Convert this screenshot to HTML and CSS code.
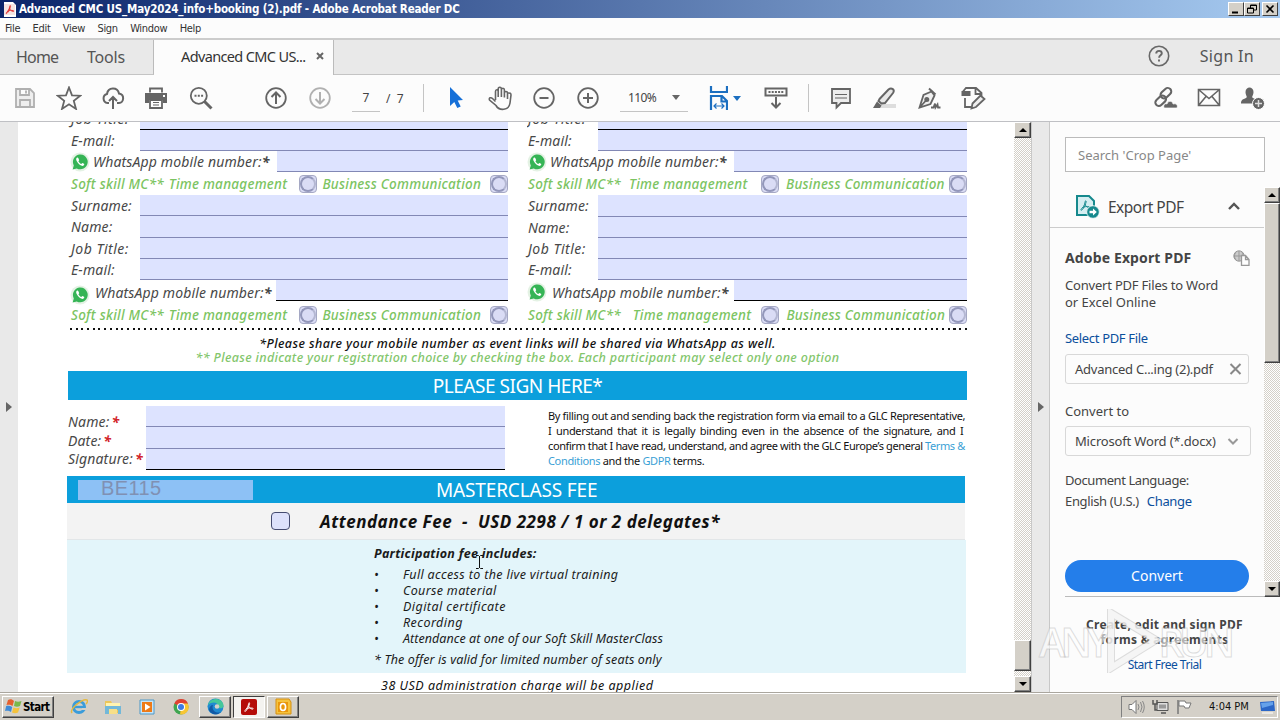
FILE: index.html
```html
<!DOCTYPE html>
<html lang="en">

<head>
  <meta charset="UTF-8">
  <meta name="viewport" content="width=device-width, initial-scale=1.0">
  <title>Advanced CMC US_May2024_info+booking (2).pdf - Adobe Acrobat Reader DC</title>
  <link rel="stylesheet" href="styles.css">
</head>

<body>
  <svg width="0" height="0" class="defs">
    <symbol id="whatsapp" viewBox="0 0 20 20">
      <circle cx="10" cy="10" r="9.5" fill="#e4f2e4"/>
      <path d="M2.6 17.4l1.2-4A7.4 7.4 0 1 1 6.800 16.400z" fill="#35b455"/>
      <path d="M7 5.600c-1.400 1-1 3 .8 5.200s4 3.800 5.800 2.800c.8-.6.8-1.400.4-1.800l-1.600-.8-1.200 1c-1.400-.6-2.200-1.600-2.800-2.800l.8-1-.8-2c-.4-.8-1-.9-1.400-.6z" fill="#fff"/>
    </symbol>
    <symbol id="acrobat" viewBox="0 0 20 20">
      <path d="M3 16c2-1.500 6-6 6.500-12 .1-2 2-1.500 1.500.5C10 8 9 11 5.500 16c-1.500 2-3.500 1.500-2.500 0zM5 13.500c4-2 7-2.300 11-1.500 2 .6 1 2-1 1.500-3-.8-5-3-6-6" fill="none" stroke="currentColor" stroke-width="1.500"/>
    </symbol>
  </svg>

  <div class="app">
    <div class="titlebar">
      <svg class="title-icon" width="12" height="15" viewBox="0 0 12 15"><path d="M0 0h9l3 3v12H0z" fill="#fff"/><path d="M0 2h11v11H0z" fill="#f4e4e2"/><svg x="0" y="2" width="12" height="11" color="#d22"><use href="#acrobat"/></svg></svg>
      <span class="title-text">Advanced CMC US_May2024_info+booking (2).pdf - Adobe Acrobat Reader DC</span>
      <div class="win-buttons">
        <span class="win-btn"><svg width="14" height="12"><path d="M3 9.500h6" stroke="#000" stroke-width="2"/></svg></span>
        <span class="win-btn"><svg width="14" height="12"><path d="M5.500 5V2h6v5H9M5 2.500h7M2.500 5h6v5h-6zM2 5.500h7" fill="none" stroke="#000"/></svg></span>
        <span class="win-btn last"><svg width="14" height="12"><path d="M3.500 2.500l7 7m0-7l-7 7" stroke="#000" stroke-width="1.600"/></svg></span>
      </div>
    </div>

    <div class="menubar">
      <span>File</span><span>Edit</span><span>View</span><span>Sign</span><span>Window</span><span>Help</span>
    </div>

    <div class="tabs">
      <div class="tab-left"><span class="home">Home</span><span class="tools">Tools</span></div>
      <div class="tab-active"><span>Advanced CMC US...</span><svg width="8" height="8"><path d="M1 1l6 6m0-6l-6 6" stroke="#666" stroke-width="2"/></svg></div>
      <div class="tab-right">
        <svg width="22" height="22" viewBox="0 0 22 22"><circle cx="11" cy="11" r="9.700" fill="none" stroke="#686868" stroke-width="1.600"/><path d="M8.200 8.500c.1-3.600 5.600-3.400 5.600-.2 0 2-2.700 2-2.700 4.400M11 14.500v2" fill="none" stroke="#686868" stroke-width="1.900"/></svg>
        <span class="signin">Sign In</span>
      </div>
    </div>

    <div class="toolbar">
      <span class="tool dim"><svg width="24" height="24"><path d="M3 3h14l4 4v14H3zM7 3v6h9V3M7 21v-7h10v7M13 4.500v3" fill="#eee"/></svg></span>
      <span class="tool"><svg width="26" height="24"><path d="M13 1.500l3 7.800 8.300.4-6.500 5.200 2.200 8-7-4.600-7 4.600 2.200-8L1.700 9.700l8.300-.4z"/></svg></span>
      <span class="tool"><svg width="24" height="24"><path d="M8 17H6.500a4.600 4.600 0 0 1-.5-9C7 .8 16.500.8 18 7.500c6 .8 5 9.500 0 9.500h-2M12 23V11M8 15l4-4 4 4" stroke-width="2"/></svg></span>
      <span class="tool print"><svg width="24" height="24"><path d="M6 2h12v4H6zM1 7h22v10h-4v-3H5v3H1z" fill="#656565" stroke="none"/><path d="M6 6.500V2.500h12v4M6 14h12v8H6z" fill="#fff"/><path d="M9 16.500h6M9 19h6" stroke-width="1.200"/><path d="M19 10h2" stroke="#fff"/></svg></span>
      <span class="tool"><svg width="24" height="24"><circle cx="9.800" cy="9.800" r="8"/><path d="M15.500 15.500l7 7" stroke-width="3"/><path d="M5.500 9.800h2m1.300 0h2m1.300 0h2" stroke-width="2"/></svg></span>
      <span class="tool up"><svg width="24" height="24"><circle cx="12" cy="12" r="9.800"/><path d="M12 18V6.500M7.500 11L12 6.500l4.500 4.500" stroke-width="2"/></svg></span>
      <span class="tool dim"><svg width="24" height="24"><circle cx="12" cy="12" r="9.800"/><path d="M12 6v11.500M7.500 13l4.500 4.500 4.500-4.500" stroke-width="2"/></svg></span>
      <span class="page-box">7</span><span class="page-total">/&nbsp;&nbsp;7</span>
      <span class="sep"></span>
      <span class="tool cursor-tool"><svg width="14" height="24"><path d="M1 1l13 13-5.300.4 3 6-3.400 1.600-3-6L1 20z" fill="#1670d8" stroke="none"/></svg></span>
      <span class="tool"><svg width="24" height="26"><path d="M7.500 15V6.500c0-2.300 2.700-2.300 2.700 0V12 4c0-2.400 3.200-2.400 3.200 0v8V5c0-2.300 3-2.300 3 0v7.500V8c0-2 3.100-2 3.100 0 2 0 3.500-.5 3.500 2l-1 8c-1 8-11 8-14 2.500L1.500 15c-1-2.200 1.500-3 3-1.500l3 3M19.500 8v6" stroke-width="1.600"/></svg></span>
      <span class="tool"><svg width="24" height="24"><circle cx="12" cy="12" r="9.800"/><path d="M7.500 12h9" stroke-width="2"/></svg></span>
      <span class="tool"><svg width="24" height="24"><circle cx="12" cy="12" r="9.800"/><path d="M7 12h10M12 7v10" stroke-width="2"/></svg></span>
      <span class="zoom-box">110%<i class="caret"></i></span>
      <span class="fit"><svg width="19" height="26"><path d="M2 1v6h16V1M2 25V11h11l5 5v9M12.500 11v5.500H18" fill="none" stroke="#1c6fc0" stroke-width="2.200"/><path d="M5 21h10M7.500 18.500L5 21l2.500 2.500m5-5L15 21l-2.500 2.500" fill="none" stroke="#1c6fc0" stroke-width="1.200"/></svg><i class="caret blue"></i></span>
      <span class="tool keys"><svg width="24" height="24"><path d="M1.500 2.500h21v7h-21z" stroke-width="2"/><path d="M4.500 6h15" stroke-dasharray="2 1.200" stroke-width="2"/><path d="M12 11v10M7.500 17l4.500 4.500 4.500-4.500" stroke-width="2"/></svg></span>
      <span class="sep short"></span>
      <span class="tool comment"><svg width="24" height="24"><path d="M3 3h18v14h-9l-4.500 4.500V17H3z" fill="#ededed"/><path d="M6 8.500h12M6 12h12" stroke-width="1.200"/></svg></span>
      <span class="tool"><svg width="26" height="24"><path d="M9 18h15v4H2z" fill="#ddd" stroke="none"/><path d="M7.500 13L16.500 3.500c3-2.500 7 .2 4.500 3.500L13 17l-3.500.5L6.500 15z" fill="#e8e8e8" stroke-width="2"/><path d="M5 15.500l4.500 4L8 22H1z" fill="#656565" stroke="none"/></svg></span>
      <span class="tool"><svg width="25" height="24"><path d="M12 2.500l6.500 6" stroke-width="2"/><path d="M14.500 5.500l-8 3.500-4 12.500 11-3.500 4-8.500zM2.500 21.500l6.500-7" fill="#efefef"/><path d="M14 21.500h2.500l1.500-4 .5 4 2-3 .5 3h2.500" /><circle cx="9.800" cy="13.500" r="1.600" fill="#656565"/></svg></span>
      <span class="tool"><svg width="26" height="24"><path d="M8 2h8l5.500 5v3M15.500 2v6h6M5 12v9h6"/><path d="M1.500 5h9v5h-9z" fill="#656565" stroke="none"/><path d="M3 5.500L6 2h3" /><path d="M12.500 17.500l8-8 4 3.500-8.500 8-4.500 1.500z" fill="#eee"/></svg></span>
      <div class="toolbar-end">
        <span class="tool"><svg width="26" height="24"><g transform="rotate(-43 12 11)"><rect x="1" y="8" width="12" height="7" rx="3.500" stroke-width="2.100"/><rect x="10" y="6" width="12" height="7" rx="3.500" stroke-width="2.100"/></g><path d="M12 22c-1-3 1-5 3-4 1-4 6-3 6 0 4-1 5 2 4 4z" fill="#656565" stroke="#fff" stroke-width=".7"/></svg></span>
        <span class="tool"><svg width="24" height="24"><path d="M1.500 3.500h21v16h-21zl10.500 9 10.500-9M1.500 19.500l7.500-9m13.500 9l-7.500-9" stroke-width="1.600"/></svg></span>
        <span class="tool"><svg width="26" height="24"><path d="M1 17.500c0-4 2-4 5-5.500 2-1-.5-2.500-.5-6 0-6 8-6 8 0 0 3.500-2.500 5-.5 6l4 2v3.500z" fill="#656565" stroke="none"/><circle cx="18.500" cy="17.500" r="6" fill="#656565" stroke="#fff" stroke-width="1"/><path d="M15 17.500h7m-3.500-3.500v7" stroke="#ddd" stroke-width="1.500"/></svg></span>
      </div>
    </div>

    <div class="main">
      <div class="strip left"><i class="arrow"></i></div>

      <div class="document">
        <div class="columns">
          <div class="column col-left">
            <div class="row r-cut"><label class="job">Job Title:</label><span class="field black"></span></div>
            <div class="row"><label>E-mail:</label><span class="field"></span></div>
            <div class="row wa"><svg width="20" height="20"><use href="#whatsapp"/></svg><label>WhatsApp mobile number:<b>*</b></label><span class="field"></span></div>
            <div class="row soft"><span class="s1">Soft skill MC**</span><span class="s2">Time management</span><i class="radio"></i><span class="s3">Business Communication</span><i class="radio"></i></div>
            <div class="row"><label>Surname:</label><span class="field"></span></div>
            <div class="row tall"><label>Name:</label><span class="field"></span></div>
            <div class="row"><label class="job">Job Title:</label><span class="field"></span></div>
            <div class="row"><label>E-mail:</label><span class="field"></span></div>
            <div class="row wa second"><svg width="20" height="20"><use href="#whatsapp"/></svg><label>WhatsApp mobile number:<b>*</b></label><span class="field black"></span></div>
            <div class="row soft second"><span class="s1">Soft skill MC**</span><span class="s2">Time management</span><i class="radio"></i><span class="s3">Business Communication</span><i class="radio"></i></div>
          </div>
          <div class="column col-right">
            <div class="row r-cut"><label class="job">Job Title:</label><span class="field black"></span></div>
            <div class="row"><label>E-mail:</label><span class="field"></span></div>
            <div class="row wa"><svg width="20" height="20"><use href="#whatsapp"/></svg><label>WhatsApp mobile number:<b>*</b></label><span class="field"></span></div>
            <div class="row soft"><span class="s1">Soft skill MC**</span><span class="s2">Time management</span><i class="radio"></i><span class="s3">Business Communication</span><i class="radio"></i></div>
            <div class="row tall"><label>Surname:</label><span class="field"></span></div>
            <div class="row"><label>Name:</label><span class="field"></span></div>
            <div class="row"><label class="job">Job Title:</label><span class="field"></span></div>
            <div class="row"><label>E-mail:</label><span class="field"></span></div>
            <div class="row wa second"><svg width="20" height="20"><use href="#whatsapp"/></svg><label>WhatsApp mobile number:<b>*</b></label><span class="field black"></span></div>
            <div class="row soft second"><span class="s1">Soft skill MC**</span><span class="s2">Time management</span><i class="radio"></i><span class="s3">Business Communication</span><i class="radio"></i></div>
          </div>
        </div>
        <div class="dots"></div>
        <div class="notes">
          <p class="note-share"><span>*Please share your mobile number as event links will be shared via WhatsApp as well.</span></p>
          <p class="note-choice"><span>** Please indicate your registration choice by checking the box. Each participant may select only one option</span></p>
        </div>
        <div class="heading"><span class="sign-title">PLEASE SIGN HERE*</span></div>
        <div class="sign">
          <div class="sign-labels">
            <label>Name:<b>*</b></label><label>Date:<b>*</b></label><label>Signature:<b>*</b></label>
          </div>
          <div class="sign-fields"><span class="field"></span><span class="field"></span><span class="field black"></span></div>
          <div class="terms">
            <p class="t1">By filling out and sending back the registration form via email to a GLC Representative,</p>
            <p class="t2">I understand that it is legally binding even in the absence of the signature, and I</p>
            <p class="t3">confirm that I have read, understand, and agree with the GLC Europe’s general <a>Terms &amp;</a></p>
            <p class="t4"><a>Conditions</a> and the <a>GDPR</a> terms.</p>
          </div>
        </div>
        <div class="heading fee"><span class="code">BE115</span><span class="fee-title">MASTERCLASS FEE</span></div>
        <div class="attendance"><i class="checkbox"></i><span>Attendance Fee&nbsp; -&nbsp; USD 2298 / 1 or 2 delegates*</span></div>
        <div class="includes">
          <h3>Participation fee includes:</h3>
          <ul>
            <li><span class="i1">Full access to the live virtual training</span></li>
            <li><span class="i2">Course material</span></li>
            <li><span class="i3">Digital certificate</span></li>
            <li><span class="i3">Recording</span></li>
            <li><span class="i5">Attendance at one of our Soft Skill MasterClass</span></li>
          </ul>
          <p>* The offer is valid for limited number of seats only</p>
          <svg class="ibeam" width="9" height="16"><path d="M1 1.500h2.500l1 1 1-1H8M4.500 2v12M1 14.500h2.500l1-1 1 1H8" fill="none" stroke="#111"/></svg>
        </div>
        <div class="charge"><span>38 USD administration charge will be applied</span></div>
      </div>

      <div class="scrollbar doc-scroll">
        <span class="sb-btn"><i class="tri up"></i></span>
        <span class="sb-thumb"></span>
        <span class="sb-btn"><i class="tri down"></i></span>
      </div>
      <div class="strip right"><i class="arrow"></i></div>

      <div class="sidebar">
        <div class="search">Search 'Crop Page'</div>
        <div class="side-scroll">
          <div class="side-body">
            <div class="export-head">
              <svg width="26" height="26" viewBox="0 0 26 26"><path d="M2 2h12l5 5v14H2z" fill="#d5eef1" stroke="#16898d" stroke-width="2"/><svg x="4" y="5" width="13" height="13" color="#16898d"><use href="#acrobat"/></svg><circle cx="18" cy="18" r="6.300" fill="#16898d" stroke="#fff" stroke-width=".8"/><path d="M14.500 16.700h3.500V14.500l3.800 3.500-3.800 3.500v-2.200h-3.500z" fill="#fff"/></svg>
              <span>Export PDF</span>
              <svg class="chev" width="14" height="9"><path d="M2 8l5-5 5 5" fill="none" stroke="#555" stroke-width="2.400"/></svg>
            </div>
            <div class="export-body">
              <div class="adobe"><b>Adobe Export PDF</b><svg width="17" height="16"><circle cx="6" cy="6" r="5.200" fill="#ccc" stroke="#999"/><path d="M1 6h10M6 1v10M3 2c-2 3-2 5 0 8m6-8c1 2 1 3 1 4" stroke="#999" fill="none"/><path d="M8.500 5.500h4l3.500 4v6H8.500zM12.500 6v3.500H16" fill="#fff" stroke="#999" stroke-width="1.300"/></svg></div>
              <p class="convert-text"><span class="c1">Convert PDF Files to Word</span><br><span>or Excel Online</span></p>
              <a class="select">Select PDF File</a>
              <div class="box file"><span>Advanced C...ing (2).pdf</span><svg width="13" height="12"><path d="M1.500 1l10 10m0-10l-10 10" stroke="#888" stroke-width="2"/></svg></div>
              <div class="convert-to">Convert to</div>
              <div class="box format"><span>Microsoft Word (*.docx)</span><svg width="12" height="9"><path d="M1.500 2L6 6.500 10.500 2" fill="none" stroke="#999" stroke-width="2"/></svg></div>
              <div class="language">Document Language:</div>
              <div class="english"><span>English (U.S.)</span><a>Change</a></div>
              <div class="convert">Convert</div>
            </div>
          </div>
          <div class="scrollbar side-bar">
            <span class="sb-btn"><i class="tri up"></i></span>
            <span class="sb-thumb"></span>
            <span class="sb-btn"><i class="tri down"></i></span>
          </div>
        </div>
        <div class="trial"><b class="tr1">Create, edit and sign PDF</b><b class="tr2">forms &amp; agreements</b><a>Start Free Trial</a></div>
      </div>
      <div class="watermark"><span>ANY</span><svg width="56" height="64"><path d="M5 4l45 27L5 59z" fill="none" stroke="#bdbdbd" stroke-opacity=".5" stroke-width="8"/><path d="M5 4l45 27L5 59z" fill="none" stroke="#fff" stroke-opacity=".7" stroke-width="6"/></svg><span>RUN</span></div>
    </div>

    <div class="taskbar">
      <div class="start"><svg width="18" height="17"><path d="M3 2c2-1 4-1 6 1L7.500 8C5.500 6.500 4 6.500 1.500 7z" fill="#e5602f"/><path d="M10 3c2 1 4 1 6.500 0L15 8c-2 1-4 1-6 0z" fill="#79b84a"/><path d="M1.200 8c2-.6 4-.4 6 1L6 14c-2-1.500-4-1.300-6-1z" fill="#3f8bd8"/><path d="M8.500 9.500c2 1 4 1 6.200 0L13 14.500c-2 1-4 1-6 0z" fill="#f4c23c"/></svg><b>Start</b></div>
      <div class="task"><svg width="18" height="18"><circle cx="9" cy="9" r="5.500" fill="none" stroke="#3a9cda" stroke-width="3"/><path d="M4 9h10" stroke="#3a9cda" stroke-width="2.400"/><path d="M12 11h5" stroke="#d4d0c8" stroke-width="2"/><path d="M2 15C-1 11 13 0 17 2c1 1 0 3-1 4" fill="none" stroke="#e6b93e" stroke-width="1.500"/></svg></div>
      <div class="task"><svg width="18" height="16"><path d="M1 2h6l1 2h8v10H1z" fill="#ecc65a"/><path d="M2 4h14v4H2z" fill="#fff3b0"/><path d="M1 7h16v8h-3v-4H5v4H1z" fill="#72b8d9"/><path d="M5 10h8v5H5z" fill="#f7df88"/></svg></div>
      <div class="task"><svg width="16" height="16"><path d="M1 1h14v14H1z" fill="#c7e4f7" stroke="#4c99c8"/><path d="M3 3h10v10H3z" fill="#ed7b18"/><path d="M6 4.500L11.500 8 6 11.500z" fill="#fff"/></svg></div>
      <div class="task"><svg width="16" height="16"><circle cx="8" cy="8" r="7.500" fill="#3fa550"/><path d="M8 8L1.300 4.500A7.500 7.500 0 0 1 15 4.500z" fill="#df4132"/><path d="M8 8h7.500A7.500 7.500 0 0 0 14.600 4.500H8zM8 8l-1 7.500A7.500 7.500 0 0 0 15 5H8z" fill="#f8c633"/><circle cx="8" cy="8" r="4" fill="#fff"/><circle cx="8" cy="8" r="3" fill="#3d7be4"/></svg></div>
      <div class="task raised"><svg width="17" height="17"><circle cx="8.500" cy="8.500" r="8" fill="#1f8ad1"/><path d="M1 7C3-1 15-1 16.500 7c.5 4-5 4-5.500 2 1-5-6-6-10-2z" fill="#44c79a"/><path d="M6 7c-2 5 3 9 8 7-5 5-11 1-12-2 0-3 2-5 4-5z" fill="#1259a5"/><circle cx="10" cy="8.500" r="2.300" fill="#d4d0c8"/></svg></div>
      <div class="task pressed"><svg width="16" height="16"><rect width="16" height="16" rx="2" fill="#b50c08"/><svg x="2" y="2" width="12" height="12" color="#fff"><use href="#acrobat"/></svg></svg></div>
      <div class="task raised outlook"><svg width="17" height="17"><path d="M1 1h13l2 3v12H1z" fill="#f6c33c" stroke="#d58f12"/><path d="M3 4h10v10H3z" fill="#e9960b"/><ellipse cx="8" cy="9" rx="2.600" ry="3.500" fill="none" stroke="#fff" stroke-width="1.600"/></svg></div>
      <div class="tray">
        <svg width="17" height="16"><path d="M1 5.500h3l4-4v13l-4-4H1z" fill="#fff" stroke="#777"/><path d="M10 5q2 3 0 6m2.500-8q3 5 0 10m2-11q3.500 6 0 12" fill="none" stroke="#888"/></svg>
        <svg width="17" height="16"><path d="M5 3.500h11v8H5z" fill="#ddd" stroke="#555"/><path d="M7 5.500h7v4H7z" fill="#999"/><path d="M9 14h5M1 1v4h4V1M3 5v6h2" fill="none" stroke="#555" stroke-width="1.500"/></svg>
        <svg class="flag" width="17" height="16"><path d="M2 1v14" stroke="#777" stroke-width="1.500"/><path d="M3 2h6l1 2h5l-2 5H9L8 7H3z" fill="#fff" stroke="#777"/></svg>
        <span>4:04 PM</span>
        <svg class="desk" width="17" height="14"><path d="M1 2l14-1 1 10H2z" fill="#2c67c7"/><path d="M2 3l12-1v3L3 8z" fill="#66a2ea"/><path d="M3 13h11" stroke="#fff"/></svg>
      </div>
    </div>
  </div>
</body>

</html>
```
FILE: styles.css
```css
* {
  box-sizing: border-box;
}

body {
  margin: 0;
  width: 1280px;
  height: 720px;
  overflow: hidden;
  font-family: "Noto Sans", sans-serif;
  font-size: 13px;
  color: #444;
}

p, h3, ul {
  margin: 0;
  padding: 0;
}

svg {
  flex: none;
  display: block;
}

.defs {
  display: none;
}

a {
  color: #0b4f9c;
}

.app {
  width: 1280px;
  height: 720px;
  display: flex;
  flex-direction: column;
}

.app span, .app label, .app b, .app p {
  white-space: nowrap;
}

/* window title */
.titlebar {
  height: 18px;
  display: flex;
  align-items: center;
  padding-left: 4px;
  background: linear-gradient(90deg, #0a246a, #a6caf0);
}

.title-text {
  margin-left: 3px;
  font: bold 11.5px "DejaVu Sans Condensed", "DejaVu Sans", sans-serif;
  letter-spacing: -0.17px;
  color: #fff;
}

.win-buttons {
  display: flex;
  margin-left: auto;
  padding-right: 2px;
}

.win-btn {
  width: 16px;
  height: 14px;
  background: #d4d0c8;
  border: 1px solid;
  border-color: #fff #404040 #404040 #fff;
}

.win-btn.last {
  margin-left: 2px;
}

.menubar {
  height: 20px;
  display: flex;
  align-items: center;
  padding-left: 5px;
  gap: 12.3px;
  background: #fcfcfc;
  font: 11px "DejaVu Sans Condensed", sans-serif;
  letter-spacing: -0.3px;
  color: #333;
}

/* tabs */
.tabs {
  height: 37px;
  display: flex;
  border-top: 2px solid #ccc;
  background: #e9e9e9;
  font-size: 16px;
  color: #555;
}

.tab-left {
  width: 154px;
  display: flex;
  align-items: center;
  padding-left: 16px;
  border-right: 1px solid #bbb;
  border-bottom: 1px solid #c4c4c4;
}

.home {
  width: 71px;
  letter-spacing: -0.8px;
}

.tools {
  letter-spacing: -0.2px;
}

.tab-active {
  width: 180px;
  display: flex;
  align-items: center;
  padding: 0 9px 3px 27px;
  justify-content: space-between;
  background: #fcfcfc;
  border-right: 1px solid #bbb;
  font-size: 14.5px;
  letter-spacing: -0.63px;
  color: #333;
}

.tab-right {
  flex: 1;
  display: flex;
  align-items: center;
  justify-content: flex-end;
  padding: 0 26px 2px 0;
  border-bottom: 1px solid #c4c4c4;
}

.signin {
  margin-left: 30px;
  letter-spacing: 0.3px;
}

/* toolbar */
.toolbar {
  height: 47px;
  display: flex;
  align-items: center;
  padding-left: 3px;
  background: #fcfcfc;
  border-bottom: 1px solid #bfc0c4;
}

.tool {
  width: 44px;
  flex: none;
  display: flex;
  justify-content: center;
}

.tool svg {
  fill: none;
  stroke: #656565;
  stroke-width: 1.8;
}

.tool.dim svg {
  stroke: #b0b0b0;
}

.tool.print {
  padding-right: 2px;
}

.tool.up {
  margin-left: 31px;
}

.page-box {
  width: 28px;
  height: 27px;
  margin-left: 10px;
  text-align: center;
  line-height: 25px;
  font-size: 12px;
  border-bottom: 1px solid #c4c4c4;
}

.page-total {
  width: 43px;
  padding-left: 6px;
  font-size: 12px;
}

.sep {
  width: 1px;
  height: 28px;
  background: #c4c4c4;
}

.cursor-tool {
  margin-left: 10px;
}

.zoom-box {
  width: 68px;
  height: 27px;
  margin-left: 10px;
  padding: 0 8px;
  display: flex;
  align-items: center;
  justify-content: space-between;
  font-size: 12px;
  letter-spacing: -0.6px;
  border-bottom: 1px solid #c4c4c4;
}

.caret {
  border: 4px solid transparent;
  border-top: 5px solid #666;
  border-bottom: 0;
}

.caret.blue {
  border-top-color: #1c6fc0;
}

.fit {
  display: flex;
  align-items: center;
  gap: 5px;
  margin-left: 21px;
  width: 34px;
}

.keys {
  margin-left: 11px;
}

.sep.short {
  margin-left: 10px;
}

.comment {
  margin-left: 10px;
}

.toolbar-end {
  display: flex;
  margin-left: auto;
  padding-right: 5px;
}

/* document area */
.main {
  height: 570px;
  position: relative;
  display: flex;
}

.strip {
  width: 18px;
  display: flex;
  align-items: center;
  justify-content: center;
  background: #e9e9e9;
}

.strip.right {
  border-left: 1px solid #c8c8c8;
}

.arrow {
  border: 5px solid transparent;
  border-left: 6px solid #666;
  border-right: 0;
}

.document {
  width: 996px;
  height: 570px;
  overflow: hidden;
  padding-left: 49px;
  background: #fff;
}

.columns {
  display: flex;
  gap: 19px;
  height: 205px;
}

.column {
  width: 441px;
}

.col-right {
  width: 440px;
}

.row {
  height: 21px;
  display: flex;
  align-items: center;
  padding-left: 4px;
}

.row.tall {
  height: 22px;
}

.row label, .sign-labels label {
  font-style: italic;
  font-size: 14px;
  line-height: 20px;
  letter-spacing: 0.15px;
  color: #484848;
}

.row label {
  width: 69px;
}

.row label.job {
  letter-spacing: 0.5px;
}

.col-right .row {
  padding-left: 1px;
}

.col-right .row label {
  width: 70px;
}

.row.r-cut {
  height: 8px;
  align-items: flex-end;
  overflow: hidden;
}

.row.r-cut label {
  margin-bottom: 1px;
}

.field {
  flex: 1;
  height: 100%;
  background: #dde3ff;
  border-bottom: 1px solid #8288b5;
}

.field.black {
  border-color: #000;
}

.row.wa label {
  width: auto;
  margin-left: 3px;
}

.row.wa svg {
  margin-left: -1px;
}

.row.wa .field {
  flex: none;
  margin-left: auto;
  width: 231px;
}

.row.wa.second .field {
  width: 232px;
}

.row.wa.second label {
  margin-left: 5px;
  padding-top: 4px;
}

.col-left .row.wa.second svg {
  margin-top: 8px;
}

.col-right .row.wa.second svg {
  margin-top: 3px;
}

.col-right .row.wa .field {
  width: 233px;
}

.row.soft {
  height: 23px;
  font-size: 13.5px;
  font-style: italic;
  font-weight: 500;
  letter-spacing: 0.25px;
  color: #7cc462;
}

.row.soft.second {
  height: 26px;
  padding-top: 1px;
}

.s1 {
  width: 98px;
}

.s2 {
  width: 131px;
}

.s3 {
  width: 168px;
}

.col-left .s3 {
  margin-left: -1px;
}

.col-right .s1 {
  width: 101px;
}

.col-right .s2 {
  width: 132px;
}

.col-right .s3 {
  width: 163px;
}

.col-right .soft.second .s1 {
  width: 105px;
}

.col-right .soft.second .s2 {
  width: 129px;
}

.radio {
  width: 18px;
  height: 18px;
  margin-right: 6px;
  flex: none;
  display: flex;
  align-items: center;
  justify-content: center;
  border: 1px solid #a5a8c4;
  border-radius: 4px;
  background: #dadcf5;
}

.col-right .radio {
  margin-right: 7px;
}

.column .radio:last-child {
  margin-right: 0;
}

.radio::before {
  content: "";
  width: 12px;
  height: 12px;
  border-radius: 50%;
  border: 2px solid #9397ba;
  border-right-color: #b4b7d2;
}

.dots {
  width: 898px;
  height: 2px;
  margin: 1px 0 0 3px;
  background: repeating-linear-gradient(90deg, #111 0 2px, #fff 2px 5.700px);
}

.notes {
  width: 901px;
  height: 41px;
  padding-top: 7px;
  text-align: center;
  font-style: italic;
  font-weight: 500;
  font-size: 12.5px;
  line-height: 14px;
}

.note-share {
  letter-spacing: 0.41px;
  color: #111;
}

.note-choice {
  letter-spacing: 0.34px;
  color: #83c66c;
}

.heading {
  width: 899px;
  height: 29px;
  margin-left: 1px;
  display: flex;
  align-items: center;
  justify-content: center;
  background: #0c9fdc;
  font-size: 19px;
  color: #fff;
}

.sign-title {
  letter-spacing: -0.47px;
}

.sign {
  height: 76px;
  display: flex;
  padding: 6px 0 0 1px;
}

.sign-labels {
  width: 78px;
  padding-top: 7px;
}

.sign-labels label {
  display: block;
  height: 18.500px;
  line-height: 18.500px;
}

.sign-labels b {
  margin-left: 2px;
  color: #d2232a;
}

.sign-fields {
  width: 359px;
  height: 64px;
  display: flex;
  flex-direction: column;
}

.terms {
  width: 417px;
  margin-left: 43px;
  padding-top: 2px;
  font-size: 11px;
  line-height: 15px;
  letter-spacing: -0.34px;
  color: #111;
}

.terms .t2 {
  word-spacing: 2.1px;
}

.terms .t3 {
  letter-spacing: -0.4px;
}

.terms a {
  color: #3a9fd5;
}

.heading.fee {
  width: 898px;
  height: 27px;
  margin: 0;
  justify-content: flex-start;
}

.code {
  width: 175px;
  height: 20px;
  margin-left: 11px;
  padding-left: 23px;
  font: 20px/17px "Liberation Sans", sans-serif;
  letter-spacing: 0.4px;
  background: #8dc1f5;
  color: #8090b3;
}

.fee-title {
  margin-left: 183px;
  letter-spacing: -0.15px;
}

.attendance {
  width: 898px;
  height: 37px;
  display: flex;
  align-items: center;
  padding-left: 204px;
  background: #f3f3f3;
  border-bottom: 1px solid #e2e6e8;
  font-size: 17px;
  font-style: italic;
  font-weight: bold;
  letter-spacing: 0.52px;
  color: #111;
}

.checkbox {
  width: 19px;
  height: 18px;
  margin-right: 30px;
  border: 1.5px solid #454b70;
  border-radius: 4px;
  background: #dde1fb;
}

.includes {
  position: relative;
  width: 899px;
  height: 133px;
  padding: 6px 0 0 307px;
  background: #e3f5fa;
  font-size: 12.5px;
  font-style: italic;
  color: #1b1b1b;
}

.includes h3 {
  font-size: 12.5px;
  line-height: 16px;
  letter-spacing: 0.28px;
  margin-bottom: 5px;
}

.includes ul {
  list-style: none;
  line-height: 16px;
}

.includes li::before {
  content: "•";
  display: inline-block;
  width: 29px;
}

.i1, .i2 {
  letter-spacing: 0.34px;
}

.i3 {
  letter-spacing: 0.45px;
}

.i5 {
  letter-spacing: 0.05px;
}

.includes p {
  margin-top: 5px;
  line-height: 16px;
  letter-spacing: 0.12px;
}

.ibeam {
  position: absolute;
  left: 408px;
  top: 14px;
}

.charge {
  padding: 4px 0 0 314px;
  font-style: italic;
  font-size: 12.5px;
  line-height: 18px;
  letter-spacing: 0.5px;
  color: #111;
}

/* classic scrollbars */
.scrollbar {
  display: flex;
  flex-direction: column;
  background: repeating-conic-gradient(#d4d0c8 0 25%, #fff 0 50%) 0 0 / 2px 2px;
}

.sb-btn, .sb-thumb {
  background: #d4d0c8;
  border: 1px solid;
  border-color: #fff #404040 #404040 #fff;
  box-shadow: inset -1px -1px #808080;
}

.sb-btn {
  height: 16px;
  display: flex;
  align-items: center;
  justify-content: center;
}

.tri {
  border: 4px solid transparent;
}

.tri.up {
  border-top: 0;
  border-bottom-color: #000;
}

.tri.down {
  border-bottom: 0;
  border-top-color: #000;
}

.doc-scroll {
  width: 17px;
}

.doc-scroll .sb-thumb {
  height: 31px;
  margin: 502px 0 5px;
}

/* right panel */
.sidebar {
  width: 231px;
  background: #fcfcfc;
  border-left: 1px solid #c8c8c8;
}

.search {
  width: 200px;
  height: 35px;
  margin: 15px 0 15px 15px;
  padding-left: 12px;
  line-height: 35px;
  border: 1px solid #bbb;
  background: #fff;
  color: #888;
}

.side-scroll {
  height: 410px;
  display: flex;
}

.side-body {
  width: 214px;
}

.export-head {
  height: 41px;
  display: flex;
  align-items: center;
  padding-left: 25px;
  border-bottom: 1px solid #ccc;
  font-size: 15.5px;
  letter-spacing: -0.5px;
}

.export-head span {
  margin-left: 7px;
  width: 119px;
}

.chev {
  margin-top: -4px;
}

.export-body {
  height: 369px;
  margin-left: 15px;
  border-bottom: 1px solid #bbb;
}

.adobe {
  display: flex;
  align-items: center;
  justify-content: space-between;
  width: 185px;
  padding-top: 20px;
  font-size: 14px;
  line-height: 20px;
  letter-spacing: 0.13px;
}

.convert-text {
  margin-top: 9px;
  line-height: 17px;
}

.c1 {
  letter-spacing: -0.2px;
}

.select {
  display: block;
  margin-top: 18px;
  line-height: 18px;
  letter-spacing: -0.33px;
}

.box {
  width: 184px;
  height: 30px;
  margin-top: 7px;
  padding: 0 6px 0 9px;
  display: flex;
  align-items: center;
  justify-content: space-between;
  border: 1px solid #d8d8d8;
  border-radius: 3px;
  letter-spacing: -0.25px;
}

.convert-to {
  margin-top: 18px;
  line-height: 18px;
}

.box.format {
  width: 186px;
  margin-top: 6px;
  padding-right: 11px;
  letter-spacing: -0.17px;
}

.language {
  margin-top: 14px;
  line-height: 20px;
  letter-spacing: -0.42px;
}

.english {
  display: flex;
  gap: 8px;
  margin-top: 1px;
  line-height: 21px;
  letter-spacing: -0.35px;
}

.convert {
  width: 184px;
  height: 32px;
  margin-top: 48px;
  border-radius: 16px;
  background: #247eea;
  color: #fff;
  font-size: 14px;
  line-height: 31px;
  text-align: center;
}

.side-bar {
  width: 16px;
}

.side-bar .sb-thumb {
  height: 160px;
  margin-bottom: 218px;
}

.trial {
  width: 199px;
  margin-left: 15px;
  padding-top: 20px;
  display: flex;
  flex-direction: column;
  align-items: center;
  line-height: 15px;
  font-size: 12px;
  letter-spacing: 0.3px;
}

.trial a {
  margin-top: 10px;
  letter-spacing: -0.5px;
}

.watermark {
  position: absolute;
  left: 1039px;
  top: 487px;
  display: flex;
  align-items: center;
  font: 600 40px "Open Sans", sans-serif;
  letter-spacing: -5px;
  color: rgba(255, 255, 255, 0.6);
  -webkit-text-stroke: 1px rgba(180, 180, 180, 0.45);
}

.watermark svg {
  margin: 0 -4px 0 1px;
}

/* taskbar */
.taskbar {
  height: 28px;
  display: flex;
  align-items: center;
  padding: 2px 2px 2px;
  background: #d4d0c8;
  border-top: 1px solid #aaa69e;
  box-shadow: inset 0 1px #fff;
}

.start {
  width: 52px;
  height: 22px;
  margin-right: 9px;
  display: flex;
  align-items: center;
  padding-left: 2px;
  border: 1px solid;
  border-color: #fff #404040 #404040 #fff;
  box-shadow: inset -1px -1px #808080;
  font: bold 11.5px "DejaVu Sans Condensed", sans-serif;
  color: #000;
  letter-spacing: -0.6px;
}

.task {
  width: 32px;
  height: 22px;
  margin-right: 2px;
  display: flex;
  align-items: center;
  justify-content: center;
}

.task.raised {
  border: 1px solid;
  border-color: #fff #404040 #404040 #fff;
  box-shadow: inset -1px -1px #808080;
}

.task.pressed {
  border: 1px solid;
  border-color: #404040 #fff #fff #404040;
  background: #f4f3f0;
}

.tray {
  width: 157px;
  height: 22px;
  margin-left: auto;
  padding-left: 6px;
  display: flex;
  align-items: center;
  border: 1px solid;
  border-color: #808080 #fff #fff #808080;
  font: 11px "DejaVu Sans Condensed", sans-serif;
  color: #111;
}

.tray svg {
  margin-right: 7px;
}

.tray .flag {
  margin-right: 16px;
}

.tray .desk {
  margin: 0 1px 0 auto;
}
```
